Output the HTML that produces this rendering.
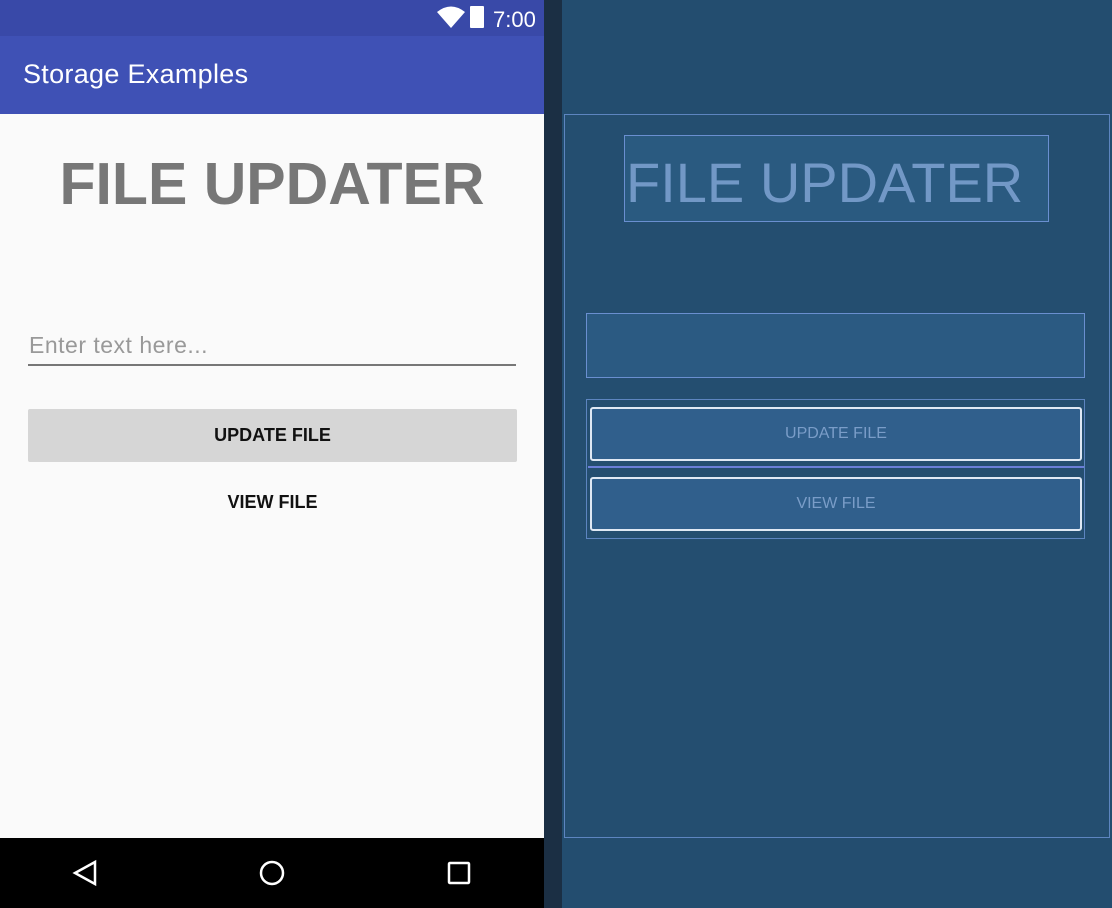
<!DOCTYPE html>
<html><head><style>
body{margin:0;width:1112px;height:908px;position:relative;overflow:hidden;font-family:"Liberation Sans",sans-serif;background:#1e3d5c}
.a{position:absolute}
</style></head><body>
<div class="a" style="left:0;top:0;width:544px;height:908px;background:#fafafa"></div>
<div class="a" style="left:0;top:0;width:544px;height:36px;background:#3949a8"></div>
<div class="a" style="left:0;top:36px;width:544px;height:78px;background:#3f51b5"></div>
<div class="a" style="left:23px;top:59px;color:#fff;font-size:27px;letter-spacing:0.3px">Storage Examples</div>
<svg class="a" style="left:436px;top:4px" width="30" height="24"><path d="M1 8 Q15 -3 29 8 L15 24 Z" fill="#fff"/></svg>
<div class="a" style="left:470px;top:6px;width:14px;height:22px;background:#fff;border-radius:1px"></div>
<div class="a" style="left:493px;top:7px;color:#fff;font-size:22px">7:00</div>
<div class="a" style="left:0;top:150px;width:544px;text-align:center;color:#777;font-size:59px;font-weight:bold">FILE UPDATER</div>
<div class="a" style="left:29px;top:332px;color:#999;font-size:23px;letter-spacing:0.5px">Enter text here...</div>
<div class="a" style="left:28px;top:364px;width:488px;height:2px;background:#777"></div>
<div class="a" style="left:28px;top:409px;width:489px;height:53px;background:#d6d6d6;border-radius:2px;text-align:center;line-height:53px;font-size:18px;font-weight:bold;color:#111">UPDATE FILE</div>
<div class="a" style="left:28px;top:476px;width:489px;height:53px;text-align:center;line-height:53px;font-size:18px;font-weight:bold;color:#111">VIEW FILE</div>
<div class="a" style="left:0;top:838px;width:544px;height:70px;background:#000"></div>
<svg class="a" style="left:0;top:838px" width="544" height="70"><path d="M95 24 L75 35 L95 46 Z" fill="none" stroke="#fff" stroke-width="2.5"/><circle cx="272" cy="35" r="11" fill="none" stroke="#fff" stroke-width="2.5"/><rect x="449" y="25" width="20" height="20" rx="1" fill="none" stroke="#fff" stroke-width="2.5"/></svg>
<div class="a" style="left:544px;top:0;width:18px;height:908px;background:#1b2f44"></div>
<div class="a" style="left:562px;top:0;width:550px;height:908px;background:#234d6f"></div>
<div class="a" style="left:564px;top:114px;width:544px;height:722px;border:1px solid #5d85c0;background:#244e70"></div>
<div class="a" style="left:624px;top:135px;width:423px;height:85px;border:1px solid #6a8fd0;background:#2a5a80"></div>
<div class="a" style="left:626px;top:150px;color:#7298c6;font-size:56px">FILE UPDATER</div>
<div class="a" style="left:586px;top:313px;width:497px;height:63px;border:1px solid #6a8fd0;background:#2b5a82"></div>
<div class="a" style="left:586px;top:399px;width:497px;height:138px;border:1px solid #5d85c0"></div>
<div class="a" style="left:590px;top:407px;width:488px;height:50px;border:2px solid #dfe8f4;border-radius:3px;background:#305f8c;text-align:center;line-height:50px;color:#7a9dc8;font-size:16px">UPDATE FILE</div>
<div class="a" style="left:588px;top:466px;width:496px;height:2px;background:#6a7fd8"></div>
<div class="a" style="left:590px;top:477px;width:488px;height:50px;border:2px solid #dfe8f4;border-radius:3px;background:#305f8c;text-align:center;line-height:50px;color:#7a9dc8;font-size:16px">VIEW FILE</div>
</body></html>
